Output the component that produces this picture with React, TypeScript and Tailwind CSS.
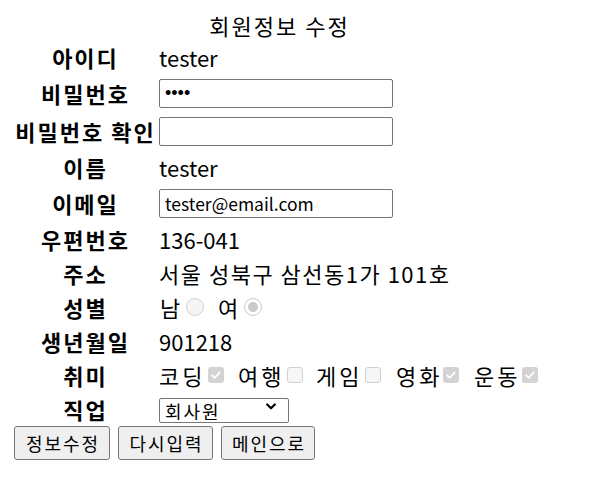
import React from "react";

const FONT = "font-['Noto_Sans_CJK_KR','Noto_Sans',sans-serif]";

function Row({ label, tall, children }: { label: string; tall?: boolean; children: React.ReactNode }) {
  return (
    <div className={`flex items-center ${tall ? "h-[38px]" : "h-[34px]"}`}>
      <div className="w-[143px] shrink-0 text-center font-bold tracking-[2px]">{label}</div>
      <div className="ml-[2px] flex shrink-0 items-center">{children}</div>
    </div>
  );
}

function Radio({ checked }: { checked?: boolean }) {
  if (!checked) {
    return <span className="block h-[18px] w-[18px] shrink-0 rounded-full border-[1.5px] border-[#d2d2d2] bg-[#f5f5f5]" />;
  }
  return (
    <span className="flex h-[18px] w-[18px] shrink-0 items-center justify-center rounded-full border-[1.5px] border-[#cbcbcb] bg-white">
      <span className="h-[10px] w-[10px] rounded-full bg-[#c9c9c9]" />
    </span>
  );
}

function Check({ checked }: { checked?: boolean }) {
  if (!checked) {
    return <span className="block h-[16px] w-[16px] shrink-0 rounded-[3px] border-[1.5px] border-[#d0d0d0] bg-[#f6f6f6]" />;
  }
  return (
    <span className="flex h-[16px] w-[16px] shrink-0 items-center justify-center rounded-[3px] bg-[#d3d3d3]">
      <svg width="12" height="12" viewBox="0 0 12 12" fill="none">
        <path d="M2.2 6.3l2.5 2.5 5-5.3" stroke="#fff" strokeWidth="1.8" strokeLinecap="round" strokeLinejoin="round" />
      </svg>
    </span>
  );
}

export default function App() {
  const hobbies = [
    { name: "코딩", checked: true, pair: "w-[79px]", word: "w-[49px]" },
    { name: "여행", checked: false, pair: "w-[78px]", word: "w-[49px]" },
    { name: "게임", checked: false, pair: "w-[80px]", word: "w-[49px]" },
    { name: "영화", checked: true, pair: "w-[78px]", word: "w-[47px]" },
    { name: "운동", checked: true, pair: "w-[66px]", word: "w-[48px]" },
  ];

  return (
    <div className={`min-h-screen bg-white pt-[10px] pl-[14px] text-[22px] text-black ${FONT}`}>
      <div className="w-[529px]">
        <div className="flex h-[30px] items-center justify-center pl-[2px] tracking-[2px]">회원정보 수정</div>

        <Row label="아이디">tester</Row>
        <Row label="비밀번호" tall>
          <input
            type="password"
            defaultValue="1234"
            readOnly
            className="h-[29px] w-[234px] rounded-[2px] border border-[#767676] bg-white pl-[5px] font-['Liberation_Sans',sans-serif] text-[18px]"
          />
        </Row>
        <Row label="비밀번호 확인" tall>
          <input type="password" readOnly className="h-[29px] w-[234px] rounded-[2px] border border-[#767676] bg-white pl-[5px] text-[18px]" />
        </Row>
        <Row label="이름">tester</Row>
        <Row label="이메일" tall>
          <input
            type="text"
            defaultValue="tester@email.com"
            readOnly
            className="h-[29px] w-[234px] rounded-[2px] border border-[#767676] bg-white pl-[5px] text-[17.5px]"
          />
        </Row>
        <Row label="우편번호">136-041</Row>
        <Row label="주소">
          <span className="tracking-[1.5px]">서울 성북구 삼선동1가 101호</span>
        </Row>
        <Row label="성별">
          <span className="w-[27px] shrink-0 pl-[1px] tracking-[2px]">남</span>
          <Radio />
          <span className="ml-[13px] w-[27px] shrink-0 pl-[1px] tracking-[2px]">여</span>
          <Radio checked />
        </Row>
        <Row label="생년월일">901218</Row>
        <Row label="취미">
          {hobbies.map((h) => (
            <div key={h.name} className={`flex shrink-0 items-center ${h.pair}`}>
              <span className={`shrink-0 tracking-[3px] ${h.word}`}>{h.name}</span>
              <Check checked={h.checked} />
            </div>
          ))}
        </Row>
        <Row label="직업">
          <div className="relative">
            <select
              defaultValue="회사원"
              className="h-[25px] w-[130px] appearance-none rounded-[2px] border border-[#767676] bg-white pl-[5px] text-[18px] leading-none tracking-[2px]"
            >
              <option>회사원</option>
              <option>학생</option>
              <option>기타</option>
            </select>
            <svg className="pointer-events-none absolute right-[13px] top-[10px]" width="10" height="7" viewBox="0 0 10 7" fill="none">
              <path d="M1.2 1.5l3.8 3.8 3.8-3.8" stroke="#000" strokeWidth="2.2" strokeLinecap="round" strokeLinejoin="round" />
            </svg>
          </div>
        </Row>
        <div className="flex h-[34px] items-center gap-[8px] text-[18px] tracking-[2px]">
          <button className="h-[34px] w-[96px] rounded-[3px] border border-[#767676] bg-[#efefef] pl-[2px]">정보수정</button>
          <button className="h-[34px] w-[95px] rounded-[3px] border border-[#767676] bg-[#efefef] pl-[2px]">다시입력</button>
          <button className="h-[34px] w-[94px] rounded-[3px] border border-[#767676] bg-[#efefef] pl-[2px]">메인으로</button>
        </div>
      </div>
    </div>
  );
}
